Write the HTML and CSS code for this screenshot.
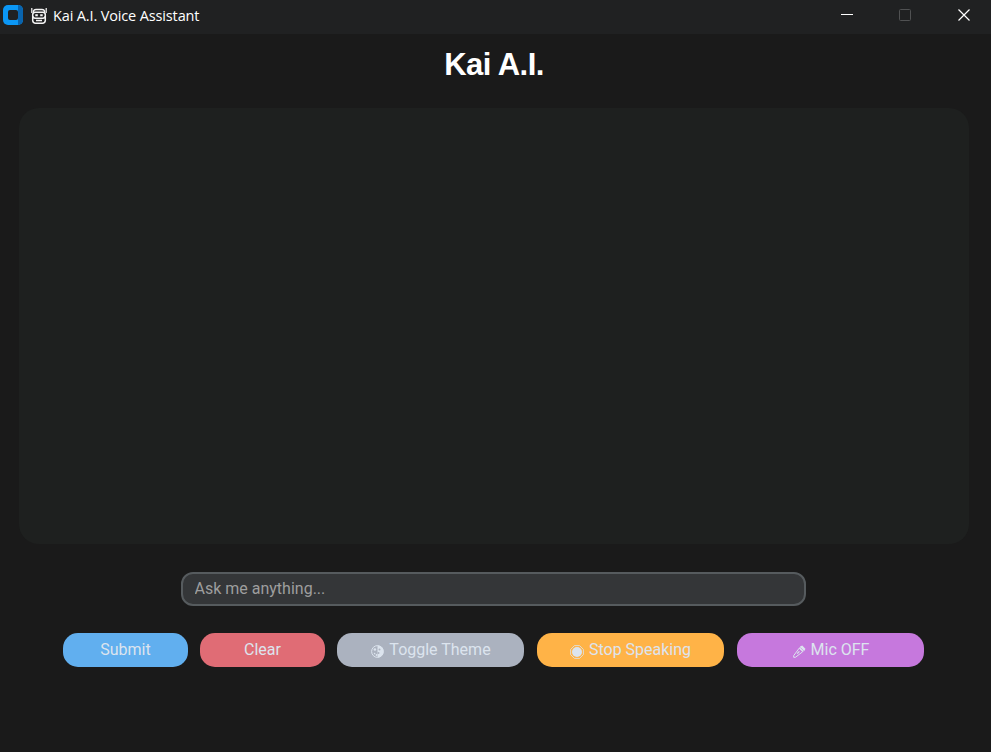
FILE: index.html
```
<!DOCTYPE html>
<html lang="en">
<head>
<meta charset="utf-8">
<title>Kai A.I. Voice Assistant</title>
<link rel="stylesheet" href="styles.css">
</head>
<body>
<header class="titlebar">
  <svg class="app-icon" width="20" height="20" viewBox="0 0 20 20">
    <rect width="20" height="20" rx="5" fill="#0b97f5"/>
    <path d="M15 0a5 5 0 0 1 5 5v10a5 5 0 0 1-5 5z" fill="#0964ae"/>
    <rect x="5" y="5" width="10" height="10" rx="2" fill="#202122"/>
  </svg>
  <svg class="robot" width="16" height="16" viewBox="0 0 16 16" fill="none" stroke="#f4f4f4" stroke-width="1.500">
    <path d="M.8 0v5M15.200 0v5" stroke-width="1.200"/>
    <path d="M2.500 4.500V3Q3 1.700 5 1.500h6Q13 1.700 13.500 3v1.500"/>
    <rect x="1.700" y="4.200" width="12.600" height="6" rx="2.500"/>
    <path d="M4.300 7.200h2.500M9.200 7.200h2.500" stroke-width="2"/>
    <path d="M1.700 8v4.700q.3 2.500 2.800 2.500h7q2.500 0 2.800-2.500V8M5 12.600h6"/>
  </svg>
  <span class="caption">Kai A.I. Voice Assistant</span>
  <svg class="controls" width="130" height="14" viewBox="0 0 130 14" fill="none">
    <path d="M0 6.500h12" stroke="#fff"/>
    <rect x="58.500" y="1.500" width="11" height="11" rx="1" stroke="#505152"/>
    <path d="M117.500 1.500l11 11M128.500 1.500l-11 11" stroke="#fff" stroke-width="1.200"/>
  </svg>
</header>
<main>
  <h1>Kai A.I.</h1>
  <section class="chat"></section>
  <input class="ask" type="text" placeholder="Ask me anything...">
  <div class="actions">
    <button class="submit">Submit</button>
    <button class="clear">Clear</button>
    <button class="wide theme">
      <svg width="13" height="13" viewBox="0 0 13 13">
        <circle cx="6.500" cy="6.500" r="5.900" fill="none" stroke="#dce4ee" stroke-width="1"/>
        <path d="M6.500.6a5.900 5.900 0 0 1 0 11.800z" fill="#dce4ee"/>
        <circle cx="3.900" cy="4.500" r="1.300" fill="#dce4ee"/><circle cx="3.600" cy="8.600" r=".8" fill="#dce4ee"/><circle cx="5.500" cy="10" r=".9" fill="#dce4ee"/>
        <circle cx="8.500" cy="4.400" r="1" fill="#abb2bf"/><circle cx="7.500" cy="8" r="1" fill="#abb2bf"/>
      </svg><span>Toggle Theme</span>
    </button>
    <button class="wide stop">
      <svg width="14" height="14" viewBox="0 0 14 14">
        <path d="M4.400.6h5.200l3.800 3.800v5.200l-3.800 3.800H4.400L.6 9.600V4.400z" fill="none" stroke="#dce4ee" stroke-width=".8"/>
        <circle cx="7" cy="7" r="5" fill="#dce4ee"/>
      </svg><span>Stop Speaking</span>
    </button>
    <button class="wide mic">
      <svg width="13" height="13" viewBox="0 0 13 13">
        <path d="M6.200 3.200L.7 10.600v1.700h1.700L9.600 6.800z" fill="none" stroke="#dce4ee" stroke-width="1"/>
        <path d="M6.200 3Q7.200.7 9.200.6l3.200 3.200Q12.200 6 9.900 6.700z" fill="#dce4ee"/>
        <path d="M4.200 8.600l2.200-2.200" stroke="#dce4ee" stroke-width="1.300"/>
        <path d="M7.300 2.400l3.500 3.500" stroke="#c678dd" stroke-width=".6"/>
      </svg><span>Mic OFF</span>
    </button>
  </div>
</main>
</body>
</html>
```
FILE: styles.css
```
* { box-sizing: border-box; }
body {
  margin: 0;
  height: 752px;
  overflow: hidden;
  background: #1a1a1a;
  font-family: Roboto, sans-serif;
}
.titlebar {
  display: flex;
  align-items: center;
  height: 34px;
  padding: 0 20px 4px 3px;
  background: #202122;
  color: #fff;
}
.robot { margin: 2px 0 0 8px; }
.caption {
  margin: 2px 0 0 6px;
  font: 14.5px/20px "Open Sans", sans-serif;
  letter-spacing: -0.14px;
  white-space: nowrap;
}
.controls { margin-left: auto; }
main {
  display: flex;
  flex-direction: column;
  align-items: center;
}
h1 {
  margin: 12px 0 0;
  padding-right: 3px;
  height: 36px;
  font: bold 31px/37px "Liberation Sans", sans-serif;
  letter-spacing: -0.55px;
  color: #fff;
}
.chat {
  width: 950px;
  height: 436px;
  margin: 26px 3px 0 0;
  border-radius: 20px;
  background: #1e201f;
}
.ask {
  width: 625px;
  height: 34px;
  margin: 28px 5px 0 0;
  padding: 0 12px 2px;
  border: 2px solid #565b5e;
  border-radius: 12px;
  background: #343638;
  font: 16px Roboto, sans-serif;
  color: #dce4ee;
}
.ask::placeholder { color: #9e9e9e; opacity: 1; }
.actions {
  display: grid;
  grid-template-columns: 125px 125px 187px 188px 188px;
  column-gap: 12px;
  margin: 27px 4px 0 0;
}
button {
  display: flex;
  align-items: center;
  justify-content: center;
  height: 34px;
  padding: 0;
  border: 0;
  border-radius: 15px;
  font: 16px/20px Roboto, sans-serif;
  color: #dce4ee;
}
.wide { width: 187px; justify-self: end; }
button svg { margin: 3px 5px 0 0; }
.theme svg, .mic svg { margin-left: 1px; }
.submit { background: #61afef; }
.clear { background: #e06c75; }
.theme { background: #abb2bf; }
.stop { background: #ffb347; }
.mic { background: #c678dd; }
```
